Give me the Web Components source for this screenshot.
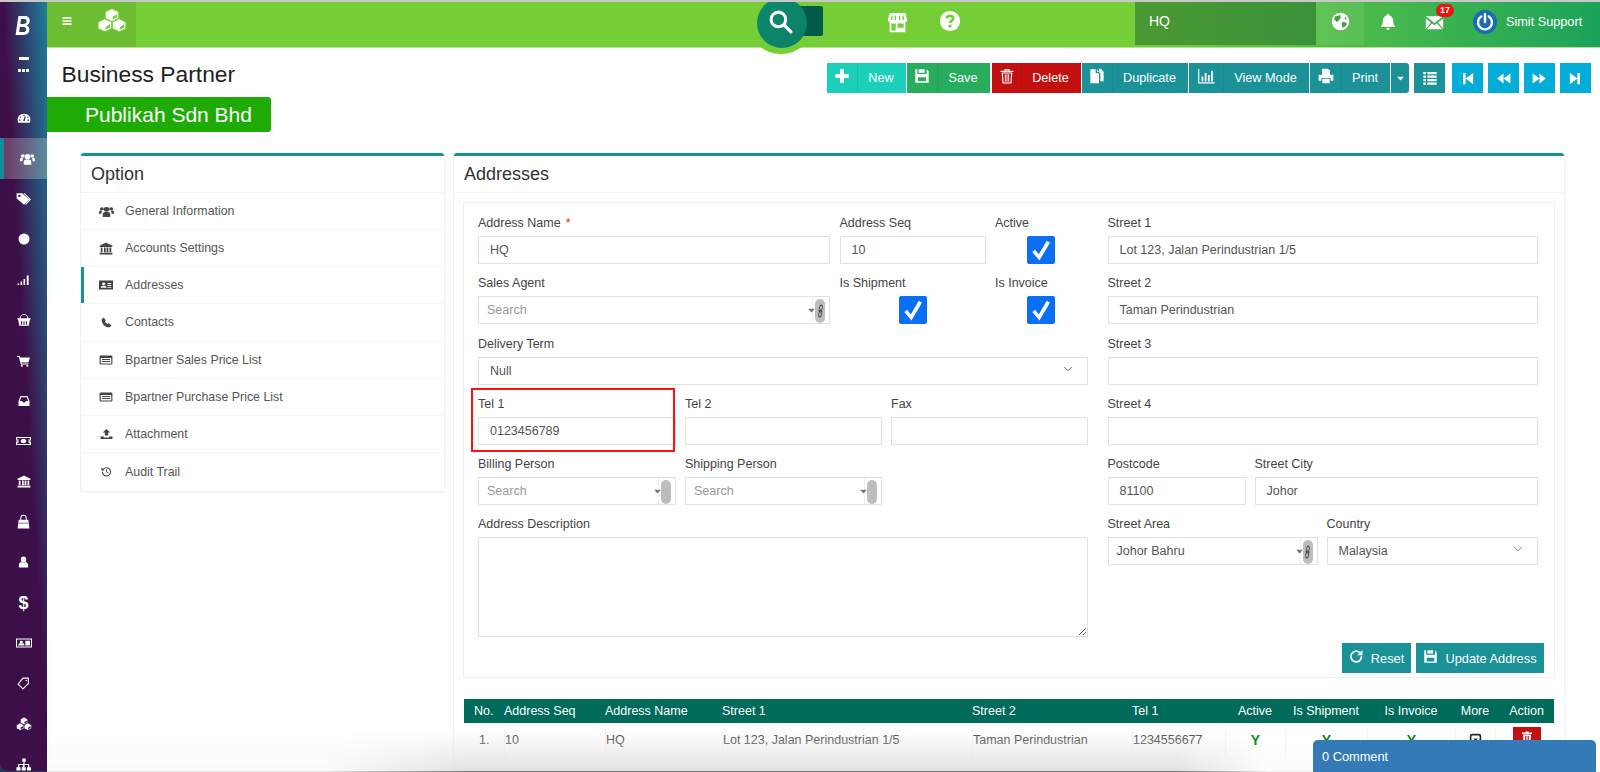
<!DOCTYPE html>
<html lang="en"><head><meta charset="utf-8"><title>Business Partner</title>
<style>
html,body{margin:0;padding:0;height:772px;overflow:hidden;background:#fff;font-family:"Liberation Sans",Arial,sans-serif}
</style></head><body>
<x-app></x-app>
<script>
const hex=(cx,cy,r)=>{const k=.87*r,h=.5*r;return `<polygon points="${cx},${cy-r} ${cx+k},${cy-h} ${cx+k},${cy+h} ${cx},${cy+r} ${cx-k},${cy+h} ${cx-k},${cy-h}" fill="currentColor" stroke="var(--cut,#76ce36)" stroke-width=".8"/><polygon points="${cx+.6},${cy+1.6} ${cx+k-1.2},${cy-h+2.2} ${cx+k-1.2},${cy+h-1} ${cx+.6},${cy+r-2}" fill="var(--cut,#76ce36)"/>`};
const S='fill="none" stroke="currentColor" stroke-linecap="round" stroke-linejoin="round"';
const IC={
bars:'<path d="M3 4h18v3.4H3zM3 10.3h18v3.4H3zM3 16.6h18V20H3z"/>',
cubes:hex(12,6.8,6.2)+hex(6.3,16.6,6.2)+hex(17.7,16.6,6.2),
search:`<circle cx="10" cy="10" r="7" ${S} stroke-width="3"/><path d="M15.5 15.5L22 22" ${S} stroke-width="3.2"/>`,
store:'<path fill-rule="evenodd" d="M3 1h18l2 8a3 3 0 0 1-2 2.6V23H3V11.6A3 3 0 0 1 1 9zM5 4l-.6 5h1.6l.4-5zM9 4l-.3 5h1.6V4zM13.700 4v5h1.600L15 4zM17.600 4l.4 5h1.600L19 4zM5 13v8h5v-8zM12 13v5h7v-5z"/>',
help:`<circle cx="12" cy="12" r="11"/><path d="M8.500 9.200C8.700 5.500 15.500 5.500 15.500 9.300c0 2.500-3.500 2.600-3.500 5" fill="none" stroke="var(--cut,#76ce36)" stroke-width="2.800"/><rect x="10.400" y="16" width="3.200" height="3" fill="var(--cut,#76ce36)"/>`,
globe:'<circle cx="12" cy="12" r="11"/><path fill="#43a048" d="M5 5c3 1 5-1 7-2-1 2 1 3 0 5-2 2-1 3-4 4-1 2-2-2-4-3zM14 13c3-1 5 0 6 2-1 2-3 4-5 5-1-2-2-4-1-7zM18 6l2 3-3 0z"/>',
bell:'<path d="M12 1.500a2 2 0 0 1 2 1.800c3.500 1 5 4 5 7.700 0 4 1 5.500 3 7.500H2c2-2 3-3.500 3-7.500 0-3.700 1.500-6.700 5-7.700a2 2 0 0 1 2-1.800zM9.500 20h5a2.500 2.500 0 0 1-5 0z"/>',
mail:'<path d="M1 4l11 8.500L23 4zM1 7v13l6.500-8zM23 7v13l-6.500-8zM9 13.200L2 20.500h20l-7-7.300-3 2.300z"/>',
plus:'<path d="M9 2h6v7h7v6h-7v7H9v-7H2V9h7z"/>',
save:'<path fill-rule="evenodd" d="M2 2h3v7h14V2l3 3v17H2zM7 2h9v5H7zM6 14v6h12v-6z"/>',
trash:`<path d="M3 5h18M9 5V2.500h6V5" ${S} stroke-width="1.800"/><path d="M5 7.500l1 15h12l1-15z" ${S} stroke-width="1.800"/><path d="M9.500 10v10M12 10v10M14.500 10v10" ${S} stroke-width="1.300"/>`,
trashf:'<path d="M9 1h6v2h7v3H2V3h7zM4 7h16l-1 16H5zM8 10v10h1.600V10zM11.200 10v10h1.600V10zM14.400 10v10H16V10z" fill-rule="evenodd"/>',
copy:'<path d="M2 2h8v6h5v15H2zM12 2l3 4h-3zM16 8l-1-3V1h3l4 5v14h-5V8z"/>',
chart:`<path d="M1 2v19h22" ${S} stroke-width="1.600"/><path d="M5 12h2.500v7H5zM9.500 7H12v12H9.500zM14 10h2.500v9H14zM18.500 4H21v15h-2.500z"/>`,
print:'<path fill-rule="evenodd" d="M6 1h9l3 3v6H6zM1 10h22v9h-4v-4H5v4H1zM6.500 16h11v7h-11z"/>',
list:'<path d="M2 3h4v3.500H2zM8 3h14v3.500H8zM2 8.200h4v3.500H2zM8 8.200h14v3.500H8zM2 13.400h4v3.500H2zM8 13.400h14v3.500H8zM2 18.600h4V22H2zM8 18.600h14V22H8z"/>',
first:'<path d="M5 3h4v18H5zM21 3v18L9 12z"/>',
prev:'<path d="M12 4v16L2 12zM23 4v16l-11-8z"/>',
next:'<path d="M1 4v16l11-8zM12 4v16l10-8z"/>',
last:'<path d="M3 3v18l12-9zM15 3h4v18h-4z"/>',
caret:'<path d="M3 7h18l-9 10z"/>',
chev:`<path d="M5 8.500l7 7 7-7" ${S} stroke-width="1.800"/>`,
gauge:'<path fill-rule="evenodd" d="M12 3a11 11 0 0 1 11 11c0 2-.5 4-1.500 6h-19A11 11 0 0 1 1 14 11 11 0 0 1 12 3zM11 5v3h2V5zM5 8l-1 1 2 2 1-1zM19 8l-2 2 1 1 2-2zM3 14v2h3v-2zM18 14v2h3v-2zM10.500 16a2 2 0 0 0 3 0l1.500-8-1.500-.3z"/>',
users:'<circle cx="12" cy="8" r="4.500"/><circle cx="4.500" cy="7" r="3"/><circle cx="19.500" cy="7" r="3"/><path d="M6 22v-5c0-3 2-4 6-4s6 1 6 4v5zM0 16v-3c0-2 1.500-3 3-3l2 1c-1 1-1 3-1 5zM24 16v-3c0-2-1.500-3-3-3l-2 1c1 1 1 3 1 5z"/>',
tag:'<path fill-rule="evenodd" d="M1 2h9l11 11-8 9L1 11zM5.500 4.500a2 2 0 1 0 .01 0z"/><path d="M14 2l10 11-8 9-1.500-1.500 7-7.500L12 2z"/>',
circle:'<circle cx="12" cy="12" r="11"/>',
signal:'<path d="M1 19h3v3H1zM6.500 15h3v7h-3zM12 10h3v12h-3zM18 3h3.500v19H18z"/>',
basket:`<path d="M5 10C6 4 9 2.500 12 2.500S18 4 19 10" ${S} stroke-width="1.600"/><path fill-rule="evenodd" d="M1 9h22v3h-1l-2 10H4L2 12H1zM7 14v6h1.800v-6zM11.100 14v6h1.800v-6zM15.200 14v6H17v-6z"/>`,
cart:'<path d="M0 2h5l1 3h18l-3 10H8l.5 2H21v2H7L3.500 4H0z"/><circle cx="9" cy="21.500" r="2"/><circle cx="19" cy="21.500" r="2"/>',
inbox:'<path fill-rule="evenodd" d="M5 2h14l4 10v10H1V12zM6.500 4.500l-3 7.500h5l1.500 3h4l1.500-3h5l-3-7.500z"/>',
money:'<path fill-rule="evenodd" d="M0 4h24v16H0zM2 6v12h20V6zM12 7.500a4.500 4.500 0 1 0 .01 0zM4 8.500a3.500 3.500 0 0 0 0 7zM20 8.500a3.500 3.500 0 0 1 0 7z"/><path d="M11 10h1.500v4.500h-1.500z"/>',
bank:'<path d="M12 1l11 6v2H1V7zM3 10h3v9H3zM8.500 10h3v9h-3zM13 10h3v9h-3zM18 10h3v9h-3zM1 20h22v3H1z"/>',
bag:`<path d="M7 10V5.500a5 5 0 0 1 10 0V10" ${S} stroke-width="1.800"/><path d="M3 8h18l2 15H1z"/><path d="M3 14h18" stroke="var(--cut,#3d0f48)" stroke-width="1"/>`,
user:'<circle cx="12" cy="7" r="6"/><path d="M2 23v-5c0-4 3-6 5.500-6 3 1.500 6 1.500 9 0C19 12 22 14 22 18v5z"/>',
idcard:'<path fill-rule="evenodd" d="M0 3h24v18H0zM1.500 5v14h21V5z"/><circle cx="8" cy="10" r="2.500"/><path d="M3.500 17v-2c0-1.500 1.500-2.500 4.500-2.500s4.500 1 4.500 2.500v2zM14 7.500h7V17h-7z"/>',
idcardf:'<path fill-rule="evenodd" d="M0 3h24v18H0zM8 7a2.800 2.800 0 1 0 .01 0zM3 17.500h10c0-3-2-4-5-4s-5 1-5 4zM14.500 8v2H21V8zM14.500 12v2H21v-2zM14.500 16v1.500H21V16z"/>',
tago:`<path d="M11 2h10v10L11 22 2 13z" ${S} stroke-width="2"/><circle cx="17" cy="6.500" r="1.500"/>`,
sitemap:'<path d="M9 1h6v6h-2v4h8v6h3v6h-7v-6h2v-4h-6v4h2v6H8v-6h2v-4H4v4h2v6H-1v-6h3v-6h9V7H9z"/>',
phone:'<path d="M6 1.500l4.500 5.500-2 3c1 2.500 3 4.500 5.500 5.500l3-2 5.500 4.500c-1 3-3 4.500-5 4.500C9 22.500 1.500 15 1.500 6.500c0-2 1.500-4 4.500-5z"/>',
listalt:'<path fill-rule="evenodd" d="M3 3h18a2 2 0 0 1 2 2v14a2 2 0 0 1-2 2H3a2 2 0 0 1-2-2V5a2 2 0 0 1 2-2zM3 8v11h18V8zM5 10h14v2H5zM5 14h14v2H5z"/>',
upload:'<path d="M12 2l7 7h-4v6H9V9H5zM1 17h6v2h10v-2h6v5H1z"/>',
history:`<path d="M5 7a9 9 0 1 1-2 6" ${S} stroke-width="2.400"/><path d="M1 3v7h7z"/><path d="M12 8v5l3.500 2" ${S} stroke-width="2"/>`,
refresh:`<path d="M20 12a8.500 8.500 0 1 1-2.500-6" ${S} stroke-width="2.800"/><path d="M21.500 1.500V10h-8.500z"/>`,
link:`<g ${S} stroke-width="2.200"><rect x="9" y="1.500" width="7" height="12" rx="3.500" transform="rotate(25 12 8)"/><rect x="8" y="10.500" width="7" height="12" rx="3.500" transform="rotate(25 12 16)"/></g>`,
more:`<rect x="3" y="3" width="18" height="18" rx="3" ${S} stroke-width="3"/><path d="M8 10h8l-4 5z"/>`
};
function def(name,css,render){
  customElements.define(name,class extends HTMLElement{
    connectedCallback(){ if(this.shadowRoot) return;
      const a=k=>this.getAttribute(k);
      this.attachShadow({mode:'open'}).innerHTML=`<style>${css}</style>`+render(a,this);
    }
  });
}
def('x-icon',':host{display:inline-flex;line-height:0;flex:none}svg{display:block;overflow:visible}',a=>{
  const w=a('size')||16,h=a('h')||w;
  return `<svg width="${w}" height="${h}" viewBox="0 0 24 24" preserveAspectRatio="none" fill="currentColor" aria-hidden="true">${IC[a('name')]||''}</svg>`;
});

def('x-sidebar',`
:host{display:flex;flex-direction:column;width:47px;flex:none;height:769px;color:#fff;overflow:hidden;border-bottom-left-radius:8px;
 background:linear-gradient(to top right,#3d0f48 0%,#3d0f48 53%,#1c7f9b 100%);--cut:#3d0f48}
.logo{height:39px;padding-top:5px;display:flex;justify-content:center;align-items:center;font:italic 700 27px/1 "Liberation Sans",sans-serif;flex:none}
.logo span{display:block;transform:scaleX(.78);margin-right:2px}
.dash{width:10px;height:2.500px;background:#fff;margin:11px auto 0;flex:none}
.dots{display:flex;gap:1.500px;justify-content:center;margin-top:9.500px;margin-bottom:26.500px;flex:none}
.dots i{width:2.500px;height:2.500px;background:#fff}
.it{height:40.400px;flex:none;display:flex;align-items:center;justify-content:center;box-sizing:border-box}
.on{background:linear-gradient(90deg,#6f3a68,#5a8d9d);border-left:4px solid #0e8f9b;padding-left:4px}
.d{font:700 18px/1 "Liberation Sans",sans-serif}
`,()=>{
 const L=[['gauge',14,13],['users',15,14],['tag',15,14],['circle',12],['signal',13,12],['basket',14,14],['cart',13,12],['inbox',12,12],['money',15,12],['bank',14,13],['bag',13,14],['user',11,12],0,['idcard',16,12],['tago',13,13],['cubes',16,14],['sitemap',14,13]];
 return `<div class="logo"><span>B</span></div><div class="dash"></div><div class="dots"><i></i><i></i><i></i></div>`+
 L.map((x,i)=>x===0?`<div class="it d">$</div>`:`<div class="it ${i==1?'on':''}"><x-icon name="${x[0]}" size="${x[1]}" h="${x[2]||x[1]}"></x-icon></div>`).join('');
});

def('x-topbar',`
:host{display:flex;align-items:flex-start;height:45px;color:#fff;position:relative;flex:none;
 background:linear-gradient(90deg,#76ce36 0%,#76ce36 70%,#48b84c 86%,#1ba35b 100%);box-shadow:0 1px 0 #b5e491;--cut:#76ce36}
.brand{width:89px;height:45px;background:rgba(0,0,0,.08);display:flex;align-items:flex-start;box-sizing:border-box;padding:6px 0 0 14px;flex:none}
.brand x-icon:first-child{margin:7px 24px 0 0}
.mid{flex:1;height:45px;position:relative;display:flex;align-items:flex-start;padding-left:751px}
.st{margin-top:10px}
.hp{margin:8px 0 0 31px}
.halo{position:absolute;left:611px;top:0;width:68px;height:52px;border-radius:0 0 34px 34px;background:#76ce36;z-index:1}
.lens{position:absolute;left:621px;top:-4px;width:50px;height:50px;border-radius:50%;background:linear-gradient(135deg,#0c8a6c,#0e7f66);z-index:3;display:flex;align-items:center;justify-content:center;padding:0 4px 3px 0;box-sizing:border-box}
.tab{position:absolute;left:664px;top:4px;width:23px;height:30px;background:#035c4a;border-radius:0 2px 2px 0;z-index:2}
.hq{width:181px;height:43px;background:rgba(40,110,50,.55);font-size:14px;display:flex;align-items:center;padding:0 0 5px 14px;box-sizing:border-box;flex:none}
.gl{width:48px;height:43px;background:rgba(255,255,255,.08);display:flex;align-items:center;justify-content:center;padding-bottom:5px;box-sizing:border-box;flex:none}
.r{width:236px;height:45px;flex:none;display:flex;align-items:center;padding:0 0 5px 15px;box-sizing:border-box;position:relative}
.bd{position:absolute;left:72px;top:2px;min-width:12px;height:13px;padding:0 3px;background:#f10f10;border-radius:8px;font:700 9px/13px "Liberation Sans",sans-serif;text-align:center}
.pw{margin-left:29px;flex:none}
.nm{font-size:12.700px;margin-left:9px;white-space:nowrap}
`,()=>`<div class="brand"><x-icon name="bars" size="12"></x-icon><x-icon name="cubes" size="30" h="25"></x-icon></div>
<div class="mid"><div class="halo"></div><div class="tab"></div><div class="lens"><x-icon name="search" size="25"></x-icon></div>
<x-icon class="st" name="store" size="21"></x-icon><x-icon class="hp" name="help" size="22"></x-icon></div>
<div class="hq">HQ</div><div class="gl"><x-icon name="globe" size="19"></x-icon></div>
<div class="r"><x-icon name="bell" size="18"></x-icon><x-icon name="mail" size="19" style="margin-left:28px"></x-icon><span class="bd">17</span>
<svg class="pw" width="24" height="24" viewBox="0 0 24 24"><circle cx="12" cy="12" r="12" fill="#1a6cb4"/><path d="M8.200 6.500a7 7 0 1 0 7.600 0" fill="none" stroke="#fff" stroke-width="2.400" stroke-linecap="round"/><path d="M12 4v8" stroke="#fff" stroke-width="2.400" stroke-linecap="round"/></svg>
<span class="nm">Simit Support</span></div>`);

def('x-btn',`
:host{display:inline-flex;height:30px;color:#fff;font-size:12.700px;box-sizing:border-box;background:var(--bg);flex:none}
.i{display:flex;align-items:center;justify-content:center;border-right:1px solid rgba(0,0,0,.06);padding-bottom:4px;box-sizing:border-box}
.t{flex:1;display:flex;align-items:center;justify-content:center;white-space:nowrap;padding-right:2px}
`,a=>`<div class="i" style="width:${a('iw')}px"><x-icon name="${a('icon')}" size="${a('is')||16}"></x-icon></div><div class="t">${a('label')}</div>`);

def('x-sqbtn',`
:host{display:inline-flex;height:30px;width:31px;align-items:center;justify-content:center;color:#fff;background:var(--bg);flex:none}
`,a=>`<x-icon name="${a('icon')}" size="${a('is')||15}"></x-icon>`);

def('x-toolbar',`
:host{display:flex;align-items:flex-start;gap:1px;padding-top:16px}
x-sqbtn.c{width:18px;border-radius:0 3px 3px 0}
.list{margin-left:4px}.f{margin-left:6px}.n{margin-left:4px}
`,()=>`<x-btn icon="plus" label="New" iw="31" style="--bg:#1bcfb9;width:79px"></x-btn>
<x-btn icon="save" label="Save" iw="31" style="--bg:#28ad5e;width:83px"></x-btn>
<x-btn icon="trash" label="Delete" iw="30" style="--bg:#c21010;width:89px;margin-left:1px"></x-btn>
<x-btn icon="copy" label="Duplicate" iw="31" style="--bg:#1a9298;width:106px"></x-btn>
<x-btn icon="chart" label="View Mode" iw="35" is="17" style="--bg:#1a9298;width:120px"></x-btn>
<x-btn icon="print" label="Print" iw="32" style="--bg:#1a9298;width:80px"></x-btn>
<x-sqbtn class="c" icon="caret" is="9" style="--bg:#1a9298"></x-sqbtn>
<x-sqbtn class="list" icon="list" is="16" style="--bg:#1a9298"></x-sqbtn>
<x-sqbtn class="f" icon="first" style="--bg:#04acd8"></x-sqbtn>
<x-sqbtn class="n" icon="prev" style="--bg:#04acd8"></x-sqbtn>
<x-sqbtn class="n" icon="next" style="--bg:#04acd8"></x-sqbtn>
<x-sqbtn class="n" icon="last" style="--bg:#04acd8"></x-sqbtn>`);

def('x-pagehead',`
:host{display:flex;justify-content:space-between;height:50px;padding:0 9px 0 14.500px;flex:none}
h1{font-weight:400;font-size:22.800px;line-height:26px;margin:14px 0 0;color:#222}
`,()=>`<h1>Business Partner</h1><x-toolbar></x-toolbar>`);

def('x-badge',`
:host{display:flex;align-items:center;width:224px;height:35px;background:#1fab06;color:#fff;font-size:21px;box-sizing:border-box;padding-left:38px;border-radius:0 3px 3px 0;flex:none}
`,()=>`<slot></slot>`);

def('x-panel',`
:host{display:block;box-sizing:border-box;border-top:3px solid #1a9199;border-radius:3px 3px 0 0;background:#fff;box-shadow:0 0 0 1px #f0f1f1,0 1px 2px rgba(0,0,0,.12)}
h2{font-weight:400;font-size:18px;line-height:36px;height:37px;margin:0;padding:0 10px;color:#333;border-bottom:1px solid #f2f3f3;box-sizing:border-box}
`,a=>`<h2>${a('title')}</h2><slot></slot>`);

def('x-opt',`
:host{display:flex;align-items:center;height:37.150px;box-sizing:border-box;border-bottom:1px solid #f4f5f5;padding-left:18px;color:#555;font-size:12.400px;position:relative}
:host(:last-child){border-bottom:0}
.ic{width:26px;color:#444;display:flex;justify-content:center;transform:translateX(-6px)}
.b{position:absolute;left:0;top:0;bottom:0;width:3px;background:#1a9199}
`,a=>`${a('active')!==null?'<div class="b"></div>':''}<div class="ic"><x-icon name="${a('icon')}" size="${a('s')||14}" h="${a('h')||a('s')||14}"></x-icon></div><span><slot></slot></span>`);

def('x-options',':host{display:block}',()=>[
['users','General Information',15,13],['bank','Accounts Settings',14,13],['idcardf','Addresses',14,12,1],['phone','Contacts',11,11],
['listalt','Bpartner Sales Price List',14,12],['listalt','Bpartner Purchase Price List',14,12],['upload','Attachment',13,12],['history','Audit Trail',11,11]
].map(x=>`<x-opt icon="${x[0]}" s="${x[2]}" h="${x[3]}" ${x[4]?'active':''}>${x[1]}</x-opt>`).join(''));

def('x-field',`
:host{display:block;position:relative;min-width:0}
label{display:block;height:18px;line-height:18px;margin-bottom:4px;font-size:12.500px;color:#444;white-space:nowrap}
.req{color:#e11;margin-left:5px}
.box{height:28px;box-sizing:border-box;border:1px solid #dfe2e2;background:#fff;display:flex;align-items:center;padding-left:11px;font-size:12.500px;color:#555;position:relative;white-space:nowrap}
.box.s{padding-left:8px}
.ph{color:#9a9a9a}
.cv{position:absolute;right:13px;top:5px;color:#666}
.car{position:absolute;right:13px;top:9px;color:#777}
.pill{position:absolute;right:4px;top:2px;width:10px;height:24px;border-radius:5px;background:#bdbdbd;color:#444;display:flex;align-items:center;justify-content:center}
.div{position:absolute;right:16px;top:0;bottom:0;border-left:1px solid #eee}
.hl{position:absolute;left:-7px;right:1px;top:-7px;bottom:-7px;border:2px solid #f11;pointer-events:none}
`,a=>{
 const t=a('type')||'text',v=a('value')||'',ph=a('ph');
 let inner=ph?`<span class="ph">${ph}</span>`:`<span>${v}</span>`,c='box';
 if(t=='select') inner+=`<x-icon class="cv" name="chev" size="12"></x-icon>`;
 if(t=='search'||t=='searchlink'){c+=' s';inner+=`<div class="div"></div><x-icon class="car" name="caret" size="9"></x-icon><div class="pill">${t=='searchlink'?'<x-icon name="link" size="9" h="14"></x-icon>':''}</div>`;}
 return `<label>${a('label')}${a('required')!==null?'<span class="req">*</span>':''}</label><div class="${c}">${inner}</div>${a('hl')!==null?'<div class="hl"></div>':''}`;
});

def('x-check',`
:host{display:block}
label{display:block;height:18px;line-height:18px;margin-bottom:4px;font-size:12.500px;color:#444;white-space:nowrap}
.b{width:28px;height:28px;background:#0b6ff3;border-radius:2px;display:flex;align-items:center;justify-content:center;margin-left:var(--ml)}
`,a=>`<label>${a('label')}</label><div class="b"><svg width="22" height="22" viewBox="0 0 24 24"><path d="M4 13l6 7L20 3" fill="none" stroke="#fff" stroke-width="4"/></svg></div>`);

def('x-memo',`
:host{display:block}
label{display:block;height:18px;line-height:18px;margin-bottom:4px;font-size:12.500px;color:#444}
textarea{display:block;width:100%;height:100px;box-sizing:border-box;border:1px solid #dfe2e2;outline:0;margin:0;background:#fff}
`,a=>`<label>${a('label')}</label><textarea aria-label="${a('label')}"></textarea>`);

def('x-form',`
:host{display:flex;position:relative;box-sizing:border-box;height:476px;margin:9px 9px 0 9px;border:1px solid #edf0f0;padding:11px 14px 0 14px;gap:19.500px}
.l{width:610px;flex:none;display:flex;flex-direction:column}
.rw{display:grid;gap:0 10px;margin-bottom:10.300px}
.r1{grid-template-columns:352px 146px 93px;column-gap:9.500px}
.r3{grid-template-columns:198px 197px 197px;column-gap:9px}
.r5{grid-template-columns:198px 197px;column-gap:9px}
.rr{width:430.500px;flex:none;display:flex;flex-direction:column}
.pc{grid-template-columns:138px 283.500px;column-gap:9px}
.ar{grid-template-columns:210px 211.500px;column-gap:9px}
.act{position:absolute;right:10px;top:440px;display:flex;gap:5px}
`,()=>`<div class="l">
<div class="rw r1"><x-field label="Address Name" required value="HQ"></x-field><x-field label="Address Seq" value="10"></x-field><x-check label="Active" style="--ml:32px"></x-check></div>
<div class="rw r1"><x-field label="Sales Agent" type="searchlink" ph="Search"></x-field><x-check label="Is Shipment" style="--ml:59px"></x-check><x-check label="Is Invoice" style="--ml:32px"></x-check></div>
<div class="rw"><x-field label="Delivery Term" type="select" value="Null"></x-field></div>
<div class="rw r3"><x-field label="Tel 1" value="0123456789" hl></x-field><x-field label="Tel 2"></x-field><x-field label="Fax"></x-field></div>
<div class="rw r5"><x-field label="Billing Person" type="search" ph="Search"></x-field><x-field label="Shipping Person" type="search" ph="Search"></x-field></div>
<x-memo label="Address Description"></x-memo>
</div>
<div class="rr">
<div class="rw"><x-field label="Street 1" value="Lot 123, Jalan Perindustrian 1/5"></x-field></div>
<div class="rw"><x-field label="Street 2" value="Taman Perindustrian"></x-field></div>
<div class="rw"><x-field label="Street 3"></x-field></div>
<div class="rw"><x-field label="Street 4"></x-field></div>
<div class="rw pc"><x-field label="Postcode" value="81100"></x-field><x-field label="Street City" value="Johor"></x-field></div>
<div class="rw ar"><x-field label="Street Area" type="searchlink" value="Johor Bahru"></x-field><x-field label="Country" type="select" value="Malaysia"></x-field></div>
</div>
<div class="act"><x-textbtn icon="refresh" style="width:69px">Reset</x-textbtn><x-textbtn icon="save" style="width:128px">Update Address</x-textbtn></div>`);

def('x-textbtn',`
:host{display:inline-flex;align-items:center;justify-content:center;gap:7px;height:30px;background:#1a9298;color:#fff;font-size:12.800px;box-sizing:border-box;white-space:nowrap;flex:none}
x-icon{margin-top:-3px}
`,a=>`<x-icon name="${a('icon')}" size="15"></x-icon><span><slot></slot></span>`);

def('x-table',`
:host{display:block;margin:21px 10px 0 10px;font-size:12.500px}
.g{display:grid;grid-template-columns:40px 101px 117px 250px 160px 93px 60px 82px 88px 40px 57px}
.h{background:#006b5b;color:#fff;height:24px;align-items:center;font-size:12.500px}
.h>div:first-child{padding-left:10px}
.b{height:34px;color:#444;align-items:stretch}
.b>div{display:flex;align-items:center;border-left:1px solid #f4f5f5}
.b>div:first-child{border-left:0;padding-left:15px}
.c{text-align:center;justify-content:center}
.y{color:#0a8a10;font-weight:700;font-size:14px}
.del{width:28px;height:20px;background:#c21010;color:#fff;display:flex;align-items:center;justify-content:center;margin-top:-6px}
.act{padding-left:6px}
.m{color:#222;margin-top:-2px}
`,()=>`<div class="g h"><div>No.</div><div>Address Seq</div><div>Address Name</div><div>Street 1</div><div>Street 2</div><div>Tel 1</div><div class="c">Active</div><div class="c">Is Shipment</div><div class="c">Is Invoice</div><div class="c">More</div><div class="c act">Action</div></div>
<div class="g b"><div>1.</div><div>10</div><div>HQ</div><div>Lot 123, Jalan Perindustrian 1/5</div><div>Taman Perindustrian</div><div>1234556677</div><div class="c y">Y</div><div class="c y">Y</div><div class="c y">Y</div><div class="c"><x-icon class="m" name="more" size="13"></x-icon></div><div class="c act"><div class="del"><x-icon name="trashf" size="12"></x-icon></div></div></div>`);

def('x-comment',`
:host{position:absolute;left:1313px;top:740px;width:283px;height:32px;background:#337ab7;color:#fff;font-size:12.800px;border-radius:5px 5px 0 0;display:flex;align-items:center;padding-left:9px;box-sizing:border-box;z-index:5}
`,()=>`<slot></slot>`);

def('x-app',`
:host{display:block;position:relative;width:1600px;height:772px;overflow:hidden;padding-top:2px;box-sizing:border-box;background:#1d3d5c}
.top{position:absolute;left:0;right:0;top:0;height:2px;background:#c8c8c8}
.shell{display:flex;height:770px}
main{flex:1;min-width:0;display:flex;flex-direction:column;overflow:hidden;background:#fff}
.cols{display:flex;gap:10px;padding:21px 36px 0 34px;align-items:flex-start}
.opt{width:363px;flex:none;height:338px}
.addr{flex:1;min-width:0;height:700px}
.fade{position:absolute;left:47px;right:0;bottom:0;height:42px;pointer-events:none;z-index:4;
 background:linear-gradient(180deg,rgba(228,228,228,0),#e2e2e2 97.500%,#777 97.500%,#777 100%);
 -webkit-mask-image:linear-gradient(90deg,rgba(0,0,0,.2) 0,rgba(0,0,0,.2) 283px,#000 420px,#000 1130px,rgba(0,0,0,.1) 1220px,rgba(0,0,0,.1) 100%);mask-image:linear-gradient(90deg,rgba(0,0,0,.2) 0,rgba(0,0,0,.2) 283px,#000 420px,#000 1130px,rgba(0,0,0,.1) 1220px,rgba(0,0,0,.1) 100%)}
`,()=>`<div class="top"></div><div class="shell"><x-sidebar></x-sidebar><main><x-topbar></x-topbar><x-pagehead></x-pagehead><x-badge>Publikah Sdn Bhd</x-badge>
<div class="cols"><x-panel class="opt" title="Option"><x-options></x-options></x-panel><x-panel class="addr" title="Addresses"><x-form></x-form><x-table></x-table></x-panel></div></main></div>
<div class="fade"></div><x-comment>0 Comment</x-comment>`);
</script>
</body></html>
